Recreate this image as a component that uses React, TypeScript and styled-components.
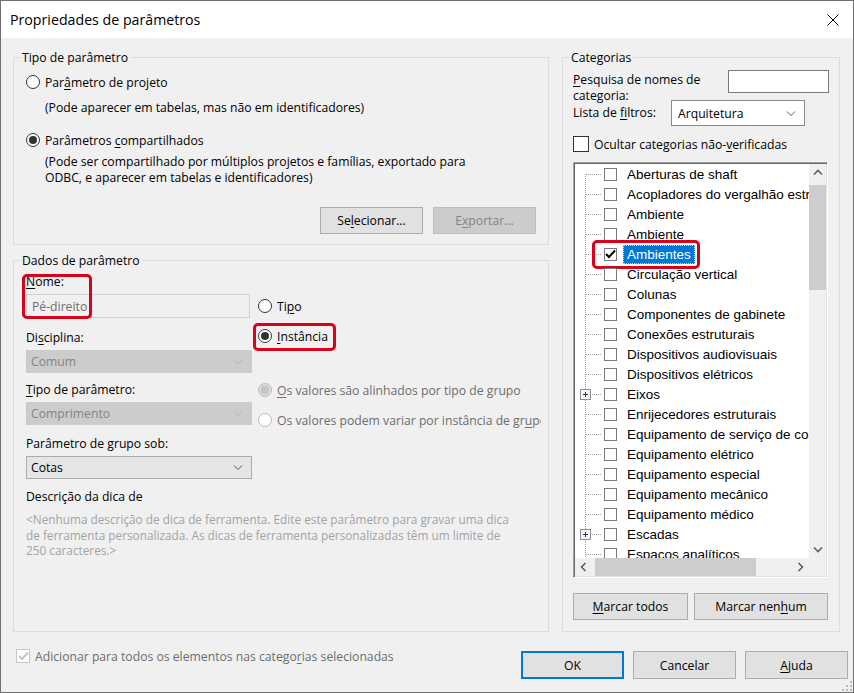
import styled, { createGlobalStyle } from "styled-components";

const GlobalStyle = createGlobalStyle`
    html, body { margin: 0; padding: 0; background: #f0f0f0; }
    body {
        font-family: "Open Sans", "Noto Sans", sans-serif;
        font-size: 12.2px;
        color: #000;
    }
    * { box-sizing: border-box; }
`;

const RED = "#d9001b";

const Window = styled.div`
    position: relative;
    width: 854px;
    height: 693px;
    border: 1px solid #707070;
    display: flex;
    flex-direction: column;
    background: #f0f0f0;
    overflow: hidden;
`;

const TitleBar = styled.div`
    height: 37px;
    flex: none;
    background: #fff;
    display: flex;
    align-items: center;
    justify-content: space-between;
    padding: 0 14px 0 9px;
    font-size: 14.2px;
`;

const Body = styled.div`
    flex: 1;
    display: flex;
    flex-direction: column;
    padding: 12px 12px 0 12px;
`;

const MainRow = styled.div`
    display: flex;
    gap: 13px;
    height: 582px;
`;

const LeftCol = styled.div`
    width: 536px;
    display: flex;
    flex-direction: column;
    gap: 8px;
`;

const Group = styled.fieldset<{ $h?: number; $pl?: number; $pr?: number }>`
    margin: 0;
    min-width: 0;
    border: 1px solid #dcdcdc;
    padding: 0 ${p => p.$pr ?? 12}px 10px ${p => p.$pl ?? 12}px;
    ${p => p.$h ? `height: ${p.$h}px;` : "flex: 1;"}
`;

const SideGroup = styled(Group)`
    flex: none;
    width: 278px;
`;

const Legend = styled.legend<{ $ml: number }>`
    padding: 0 2px;
    margin-left: ${p => p.$ml}px;
    line-height: 15px;
`;

const RadioRow = styled.div<{ $mt: number; $muted?: boolean }>`
    display: flex;
    align-items: center;
    gap: 5px;
    height: 16px;
    margin-top: ${p => p.$mt}px;
    white-space: nowrap;
    color: ${p => p.$muted ? "#6d6d6d" : "#000"};
`;

const RadioCircle = styled.span<{ $checked?: boolean; $disabled?: boolean }>`
    width: 14px;
    height: 14px;
    flex: none;
    border-radius: 50%;
    border: 1px solid ${p => p.$disabled ? "#bcbcbc" : "#333"};
    background: ${p => p.$disabled && p.$checked ? "#dadada" : "#fff"};
    display: inline-flex;
    align-items: center;
    justify-content: center;

    &::after {
        content: '';
        width: 8px;
        height: 8px;
        border-radius: 50%;
        background: ${p => p.$disabled ? "#c4c4c4" : "#333"};
        display: ${p => p.$checked ? "block" : "none"};
    }
`;

const Desc = styled.div<{ $mt: number }>`
    margin: ${p => p.$mt}px 0 0 19px;
    line-height: 16px;
    white-space: nowrap;
`;

const ButtonRow = styled.div<{ $mt: number; $gap: number; $start?: boolean }>`
    display: flex;
    justify-content: ${p => p.$start ? "flex-start" : "flex-end"};
    gap: ${p => p.$gap}px;
    margin-top: ${p => p.$mt}px;
`;

const Button = styled.div<{ $w: number; $h?: number; $disabled?: boolean; $primary?: boolean }>`
    width: ${p => p.$w}px;
    height: ${p => p.$h ?? 27}px;
    display: flex;
    align-items: center;
    justify-content: center;
    background: ${p => p.$disabled ? "#cccccc" : "#e1e1e1"};
    border: ${p => p.$primary ? "2px solid #0078d7" : `1px solid ${p.$disabled ? "#bfbfbf" : "#adadad"}`};
    color: ${p => p.$disabled ? "#838383" : "#000"};
`;

const U = styled.span`
    text-decoration: underline;
    text-underline-offset: 2px;
`;

/* Dados de parâmetro */

const FieldsArea = styled.div`
    display: flex;
    gap: 6px;
`;

const FieldCol = styled.div`
    width: 226px;
    display: flex;
    flex-direction: column;
`;

const OptionCol = styled.div`
    width: 283px;
    display: flex;
    flex-direction: column;
`;

const Clip = styled.div<{ $mt: number }>`
    margin-top: ${p => p.$mt}px;
    overflow: hidden;
    height: 18px;
    margin-bottom: -2px;
`;

const FieldLabel = styled.div<{ $mt: number }>`
    margin-top: ${p => p.$mt}px;
    line-height: 16px;
    white-space: nowrap;
`;

const NameField = styled.div`
    position: relative;
    margin-top: 6px;
    display: flex;
    flex-direction: column;
`;

const TextInput = styled.div`
    margin-top: 4px;
    width: 224px;
    height: 24px;
    background: #f0f0f0;
    border: 1px solid #d4d4d4;
    color: #6d6d6d;
    padding-left: 5px;
    display: flex;
    align-items: center;
`;

const Dropdown = styled.div<{ $tone: "disabled" | "grey" | "white"; $w: number; $h: number; $pl: number; $mt?: number }>`
    margin-top: ${p => p.$mt ?? 0}px;
    width: ${p => p.$w}px;
    height: ${p => p.$h}px;
    flex: none;
    display: flex;
    align-items: center;
    justify-content: space-between;
    padding: 0 8px 0 ${p => p.$pl}px;
    background: ${p => p.$tone === "disabled" ? "#cccccc" : p.$tone === "grey" ? "#e5e5e5" : "#fff"};
    border: 1px solid ${p => p.$tone === "disabled" ? "#cccccc" : p.$tone === "grey" ? "#acacac" : "#8a8a8a"};
    color: ${p => p.$tone === "disabled" ? "#838383" : "#000"};
`;

const InstanceWrap = styled.div`
    position: relative;
`;

const Annotation = styled.div<{ $l: number; $t: number; $w: number; $h: number }>`
    position: absolute;
    left: ${p => p.$l}px;
    top: ${p => p.$t}px;
    width: ${p => p.$w}px;
    height: ${p => p.$h}px;
    border: 3px solid ${RED};
    border-radius: 5px;
    pointer-events: none;
`;

const HintText = styled.div`
    margin-top: 7px;
    color: #a3a3a3;
    font-size: 11.8px;
    line-height: 15.5px;
    white-space: nowrap;
    span { display: block; }
`;

/* Categorias */

const SearchRow = styled.div`
    display: flex;
    align-items: flex-start;
    justify-content: space-between;
`;

const SearchLabel = styled.div`
    width: 150px;
    margin-top: 7px;
    line-height: 16px;
`;

const SearchInput = styled.div`
    margin: 5px -1px 0 0;
    width: 101px;
    height: 23px;
    background: #fff;
    border: 1px solid #7a7a7a;
`;

const FilterRow = styled.div`
    display: flex;
    align-items: flex-start;
    margin-top: -4px;
`;

const FilterLabel = styled.div`
    width: 98px;
    margin-top: 5px;
    line-height: 16px;
    white-space: nowrap;
`;

const CheckRow = styled.div<{ $mt: number; $ml?: number; $muted?: boolean }>`
    display: flex;
    align-items: center;
    gap: 5px;
    height: 16px;
    margin-top: ${p => p.$mt}px;
    margin-left: ${p => p.$ml ?? 0}px;
    white-space: nowrap;
    color: ${p => p.$muted ? "#6d6d6d" : "#000"};
`;

const Box = styled.span<{ $size: number; $disabled?: boolean }>`
    width: ${p => p.$size}px;
    height: ${p => p.$size}px;
    flex: none;
    background: #fff;
    border: 1px solid ${p => p.$disabled ? "#c4c4c4" : "#333"};
    display: inline-flex;
    align-items: center;
    justify-content: center;
`;

const Tree = styled.div`
    margin-top: 10px;
    height: 416px;
    display: flex;
    flex-direction: column;
    background: #fff;
    border-top: 1px solid #a0a0a0;
    border-left: 1px solid #a0a0a0;
    border-bottom: 1px solid #fff;
    border-right: 1px solid #fff;
    box-shadow: inset 1px 1px 0 #696969, inset -1px -1px 0 #e3e3e3;
    padding: 1px;
    font-family: "Liberation Sans", Arial, sans-serif;
    font-size: 13.5px;
`;

const TreeMain = styled.div`
    flex: 1;
    display: flex;
    min-height: 0;
`;

const TreeList = styled.div`
    flex: 1;
    overflow: hidden;
    display: flex;
    flex-direction: column;
`;

const TreeRow = styled.div`
    position: relative;
    height: 20px;
    flex: none;
    display: flex;
    align-items: center;
    white-space: nowrap;
`;

const TreeBox = styled.span`
    width: 13px;
    height: 13px;
    flex: none;
    background: #fff;
    border: 1px solid #7a7a7a;
    display: inline-flex;
    align-items: center;
    justify-content: center;
`;

const TreeLabel = styled.span<{ $selected?: boolean }>`
    margin-left: 6px;
    height: 19px;
    display: flex;
    align-items: center;
    padding: 0 3px 0 3px;
    border: 1px ${p => p.$selected ? "dotted #f7c98a" : "solid transparent"};
    background: ${p => p.$selected ? "#0078d7" : "transparent"};
    color: ${p => p.$selected ? "#fff" : "#000"};
`;

const VScroll = styled.div`
    width: 17px;
    flex: none;
    background: #f0f0f0;
    display: flex;
    flex-direction: column;
    align-items: center;
`;

const HScroll = styled.div`
    height: 18px;
    flex: none;
    background: #f0f0f0;
    display: flex;
    align-items: center;
`;

const ArrowCell = styled.div<{ $w: number; $h: number }>`
    width: ${p => p.$w}px;
    height: ${p => p.$h}px;
    flex: none;
    display: flex;
    align-items: center;
    justify-content: center;
`;

const Thumb = styled.div<{ $vertical?: boolean; $len: number }>`
    background: #cdcdcd;
    flex: none;
    ${p => p.$vertical
        ? `width: 17px; height: ${p.$len}px; margin-top: 4px;`
        : `height: 18px; width: ${p.$len}px; margin-left: 3px;`}
`;

const Filler = styled.div`
    flex: 1;
`;

const Corner = styled.div`
    width: 17px;
    height: 18px;
    background: #f0f0f0;
`;

const BottomRow = styled.div`
    display: flex;
    justify-content: space-between;
    align-items: flex-start;
    padding-top: 16px;
`;

const DialogButtons = styled.div`
    display: flex;
    gap: 9px;
    margin: 3px -7px 0 0;
`;

const Grip = styled.svg`
    position: absolute;
    right: 1px;
    bottom: 1px;
`;

type Item = { label: string; plus?: boolean; checked?: boolean; selected?: boolean };

const ITEMS: Item[] = [
    { label: "Aberturas de shaft" },
    { label: "Acopladores do vergalhão estrutural" },
    { label: "Ambiente" },
    { label: "Ambiente" },
    { label: "Ambientes", checked: true, selected: true },
    { label: "Circulação vertical" },
    { label: "Colunas" },
    { label: "Componentes de gabinete" },
    { label: "Conexões estruturais" },
    { label: "Dispositivos audiovisuais" },
    { label: "Dispositivos elétricos" },
    { label: "Eixos", plus: true },
    { label: "Enrijecedores estruturais" },
    { label: "Equipamento de serviço de comida" },
    { label: "Equipamento elétrico" },
    { label: "Equipamento especial" },
    { label: "Equipamento mecânico" },
    { label: "Equipamento médico" },
    { label: "Escadas", plus: true },
    { label: "Espaços analíticos" },
];

const Chevron = ({ color, dir = "down", thin }: { color: string; dir?: "down" | "up" | "left" | "right"; thin?: boolean }) => {
    const d = {
        down: "M1 1.5 L5 5.5 L9 1.5",
        up: "M1 5.5 L5 1.5 L9 5.5",
        left: "M5.5 1 L1.5 5 L5.5 9",
        right: "M1.5 1 L5.5 5 L1.5 9",
    }[dir];
    const horiz = dir === "down" || dir === "up";
    return (
        <svg width={horiz ? 10 : 7} height={horiz ? 7 : 10} viewBox={horiz ? "0 0 10 7" : "0 0 7 10"}>
            <path d={d} fill="none" stroke={color} strokeWidth={thin ? 1 : 1.6} />
        </svg>
    );
};

const Check = ({ color }: { color: string }) => (
    <svg width="11" height="10" viewBox="0 0 11 10">
        <path d="M1 5 L4 8 L10 1.5" fill="none" stroke={color} strokeWidth="2" />
    </svg>
);

const Connector = ({ first, plus }: { first: boolean; plus?: boolean }) => (
    <svg width="29" height="20" viewBox="0 0 29 20" style={{ flex: "none" }}>
        <line x1="10.5" y1={first ? 10 : 0} x2="10.5" y2="20" stroke="#a0a0a0" strokeDasharray="1 1" />
        <line x1="11" y1="10.5" x2="27" y2="10.5" stroke="#a0a0a0" strokeDasharray="1 1" />
        {plus && (
            <g>
                <rect x="5.5" y="5.5" width="10" height="10" fill="#f4f4f4" stroke="#919191" />
                <path d="M8 10.5 H13 M10.5 8 V13" stroke="#1c2f7a" strokeWidth="1" />
            </g>
        )}
    </svg>
);

export default function App() {
    return (
        <>
            <GlobalStyle />
            <Window>
                <TitleBar>
                    <span>Propriedades de parâmetros</span>
                    <svg width="12" height="12" viewBox="0 0 12 12">
                        <path d="M0.5 0.5 L11.5 11.5 M11.5 0.5 L0.5 11.5" stroke="#000" strokeWidth="1" />
                    </svg>
                </TitleBar>
                <Body>
                    <MainRow>
                        <LeftCol>
                            <Group $h={195}>
                                <Legend $ml={-6}>Tipo de parâmetro</Legend>
                                <RadioRow $mt={9}>
                                    <RadioCircle />
                                    <span>Par<U>â</U>metro de projeto</span>
                                </RadioRow>
                                <Desc $mt={10}>(Pode aparecer em tabelas, mas não em identificadores)</Desc>
                                <RadioRow $mt={16}>
                                    <RadioCircle $checked />
                                    <span>Parâmetros <U>c</U>ompartilhados</span>
                                </RadioRow>
                                <Desc $mt={6}>
                                    (Pode ser compartilhado por múltiplos projetos e famílias, exportado para
                                    <br />
                                    ODBC, e aparecer em tabelas e identificadores)
                                </Desc>
                                <ButtonRow $mt={21} $gap={10}>
                                    <Button $w={103}>Se<U>l</U>ecionar...</Button>
                                    <Button $w={103} $disabled>E<U>x</U>portar...</Button>
                                </ButtonRow>
                            </Group>

                            <Group>
                                <Legend $ml={-6}>Dados de parâmetro</Legend>
                                <FieldsArea>
                                    <FieldCol>
                                        <NameField>
                                            <FieldLabel $mt={0}><U>N</U>ome:</FieldLabel>
                                            <TextInput>Pé-direito</TextInput>
                                            <Annotation $l={-4} $t={0} $w={70} $h={45} />
                                        </NameField>
                                        <FieldLabel $mt={12}>Di<U>s</U>ciplina:</FieldLabel>
                                        <Dropdown $tone="disabled" $w={226} $h={23} $pl={4} $mt={4}>
                                            <span>Comum</span>
                                            <Chevron color="#b4b4b4" thin />
                                        </Dropdown>
                                        <FieldLabel $mt={9}><U>T</U>ipo de parâmetro:</FieldLabel>
                                        <Dropdown $tone="disabled" $w={226} $h={23} $pl={4} $mt={4}>
                                            <span>Comprimento</span>
                                            <Chevron color="#b4b4b4" thin />
                                        </Dropdown>
                                        <FieldLabel $mt={11}>Parâmetro de <U>g</U>rupo sob:</FieldLabel>
                                        <Dropdown $tone="grey" $w={226} $h={23} $pl={4} $mt={4}>
                                            <span>Cotas</span>
                                            <Chevron color="#505050" thin />
                                        </Dropdown>
                                    </FieldCol>
                                    <OptionCol>
                                        <RadioRow $mt={30}>
                                            <RadioCircle />
                                            <span>Ti<U>p</U>o</span>
                                        </RadioRow>
                                        <InstanceWrap>
                                            <RadioRow $mt={14}>
                                                <RadioCircle $checked />
                                                <span><U>I</U>nstância</span>
                                            </RadioRow>
                                            <Annotation $l={-5} $t={9} $w={83} $h={28} />
                                        </InstanceWrap>
                                        <RadioRow $mt={38} $muted>
                                            <RadioCircle $checked $disabled />
                                            <span><U>O</U>s valores são alinhados por tipo de grupo</span>
                                        </RadioRow>
                                        <Clip $mt={14}>
                                            <RadioRow $mt={0} $muted>
                                                <RadioCircle $disabled />
                                                <span>Os valores podem variar por instância de gr<U>u</U>po</span>
                                            </RadioRow>
                                        </Clip>
                                    </OptionCol>
                                </FieldsArea>
                                <FieldLabel $mt={10}>Descrição da dica de</FieldLabel>
                                <HintText>
                                    <span>&lt;Nenhuma descrição de dica de ferramenta. Edite este parâmetro para gravar uma dica</span>
                                    <span>de ferramenta personalizada. As dicas de ferramenta personalizadas têm um limite de</span>
                                    <span>250 caracteres.&gt;</span>
                                </HintText>
                            </Group>
                        </LeftCol>

                        <SideGroup $h={582} $pl={10} $pr={11}>
                            <Legend $ml={-4}>Categorias</Legend>
                            <SearchRow>
                                <SearchLabel><U>P</U>esquisa de nomes de categoria:</SearchLabel>
                                <SearchInput />
                            </SearchRow>
                            <FilterRow>
                                <FilterLabel>Lista de <U>f</U>iltros:</FilterLabel>
                                <Dropdown $tone="white" $w={134} $h={26} $pl={6}>
                                    <span>Arquitetura</span>
                                    <Chevron color="#606060" thin />
                                </Dropdown>
                            </FilterRow>
                            <CheckRow $mt={10}>
                                <Box $size={16} />
                                <span>Ocultar categorias não-<U>v</U>erificadas</span>
                            </CheckRow>
                            <Tree>
                                <TreeMain>
                                    <TreeList>
                                        {ITEMS.map((it, i) => (
                                            <TreeRow key={i}>
                                                <Connector first={i === 0} plus={it.plus} />
                                                <TreeBox>{it.checked && <Check color="#000" />}</TreeBox>
                                                <TreeLabel $selected={it.selected}>{it.label}</TreeLabel>
                                                {it.selected && <Annotation $l={17} $t={-4} $w={108} $h={29} />}
                                            </TreeRow>
                                        ))}
                                    </TreeList>
                                    <VScroll>
                                        <ArrowCell $w={17} $h={17}><Chevron color="#606060" dir="up" /></ArrowCell>
                                        <Thumb $vertical $len={105} />
                                        <Filler />
                                        <ArrowCell $w={17} $h={17}><Chevron color="#606060" dir="down" /></ArrowCell>
                                    </VScroll>
                                </TreeMain>
                                <HScroll>
                                    <ArrowCell $w={17} $h={18}><Chevron color="#606060" dir="left" /></ArrowCell>
                                    <Thumb $len={161} />
                                    <Filler />
                                    <ArrowCell $w={17} $h={18}><Chevron color="#606060" dir="right" /></ArrowCell>
                                    <Corner />
                                </HScroll>
                            </Tree>
                            <ButtonRow $mt={15} $gap={6} $start>
                                <Button $w={115}><U>M</U>arcar todos</Button>
                                <Button $w={134}>Marcar nen<U>h</U>um</Button>
                            </ButtonRow>
                        </SideGroup>
                    </MainRow>

                    <BottomRow>
                        <CheckRow $mt={0} $ml={3} $muted>
                            <Box $size={14} $disabled><Check color="#c4c4c4" /></Box>
                            <span>Adicionar para todos os elementos nas catego<U>r</U>ias selecionadas</span>
                        </CheckRow>
                        <DialogButtons>
                            <Button $w={103} $h={28} $primary>OK</Button>
                            <Button $w={103} $h={28}>Cancelar</Button>
                            <Button $w={103} $h={28}><U>A</U>juda</Button>
                        </DialogButtons>
                    </BottomRow>
                </Body>
                <Grip width="10" height="10" viewBox="0 0 10 10">
                    <rect x="8" y="0" width="2" height="2" fill="#bcbcbc" />
                    <rect x="4" y="4" width="2" height="2" fill="#bcbcbc" />
                    <rect x="8" y="4" width="2" height="2" fill="#bcbcbc" />
                    <rect x="0" y="8" width="2" height="2" fill="#bcbcbc" />
                    <rect x="4" y="8" width="2" height="2" fill="#bcbcbc" />
                    <rect x="8" y="8" width="2" height="2" fill="#bcbcbc" />
                </Grip>
            </Window>
        </>
    );
}
